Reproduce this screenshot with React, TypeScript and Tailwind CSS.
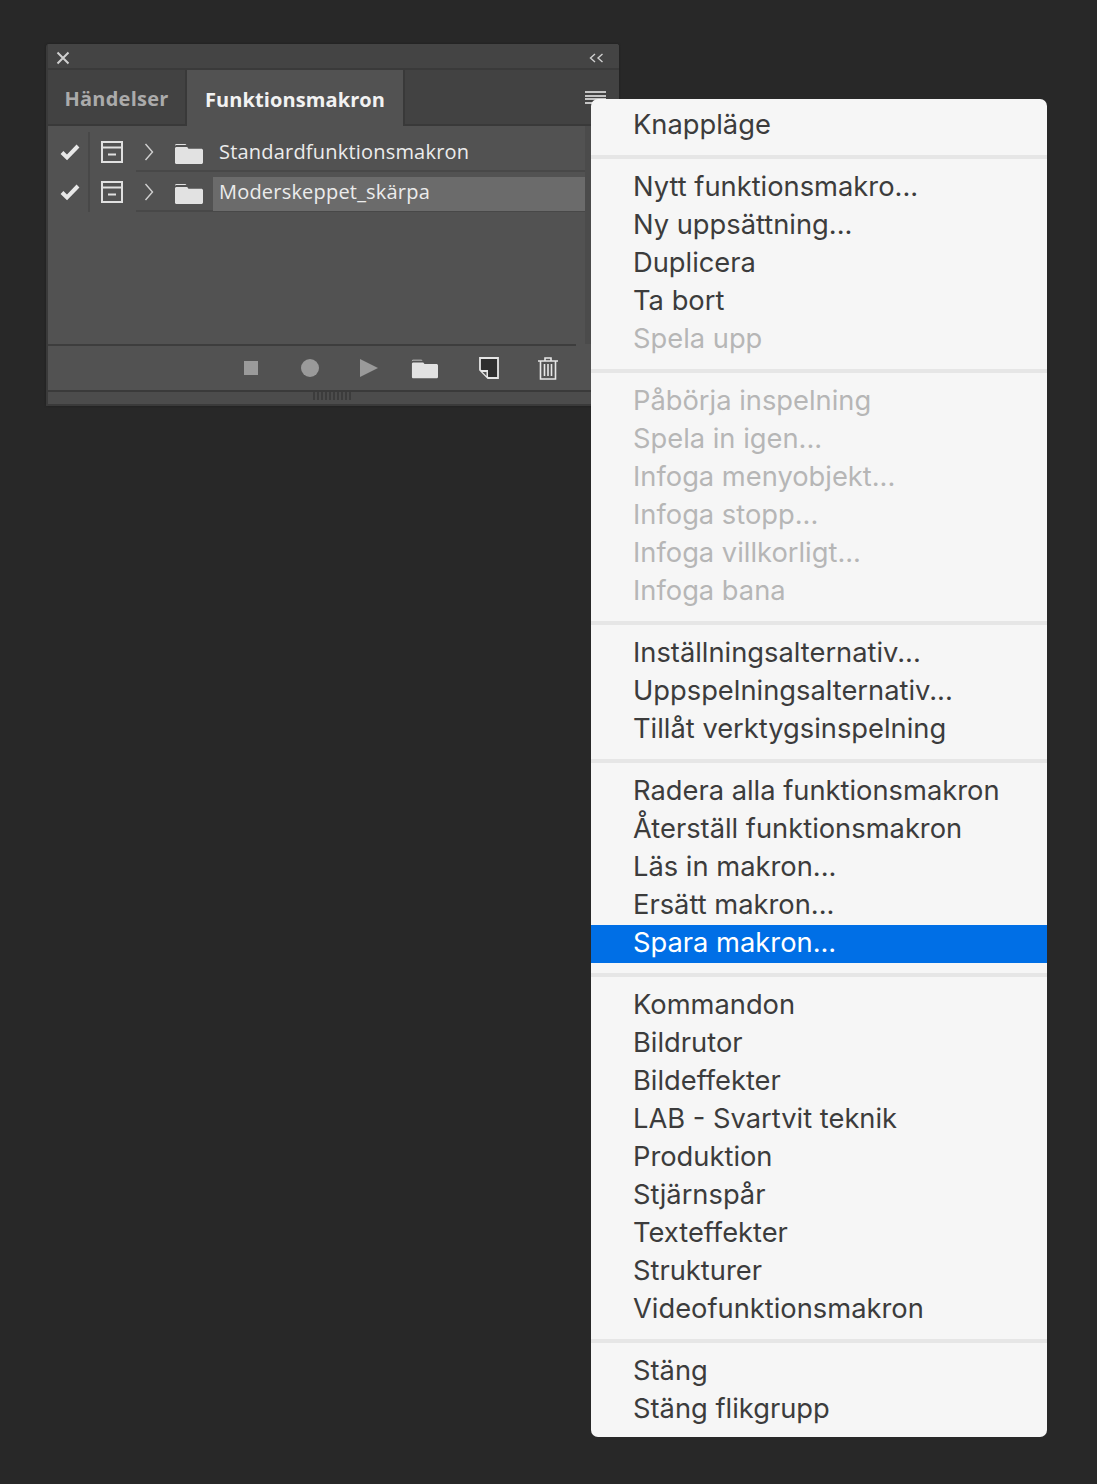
import React from 'react'

const groups = [
  [{ label: 'Knappläge' }],
  [
    { label: 'Nytt funktionsmakro...' },
    { label: 'Ny uppsättning...' },
    { label: 'Duplicera' },
    { label: 'Ta bort' },
    { label: 'Spela upp', disabled: true },
  ],
  [
    { label: 'Påbörja inspelning', disabled: true },
    { label: 'Spela in igen...', disabled: true },
    { label: 'Infoga menyobjekt...', disabled: true },
    { label: 'Infoga stopp...', disabled: true },
    { label: 'Infoga villkorligt...', disabled: true },
    { label: 'Infoga bana', disabled: true },
  ],
  [
    { label: 'Inställningsalternativ...' },
    { label: 'Uppspelningsalternativ...' },
    { label: 'Tillåt verktygsinspelning' },
  ],
  [
    { label: 'Radera alla funktionsmakron' },
    { label: 'Återställ funktionsmakron' },
    { label: 'Läs in makron...' },
    { label: 'Ersätt makron...' },
    { label: 'Spara makron...', active: true },
  ],
  [
    { label: 'Kommandon' },
    { label: 'Bildrutor' },
    { label: 'Bildeffekter' },
    { label: 'LAB - Svartvit teknik' },
    { label: 'Produktion' },
    { label: 'Stjärnspår' },
    { label: 'Texteffekter' },
    { label: 'Strukturer' },
    { label: 'Videofunktionsmakron' },
  ],
  [{ label: 'Stäng' }, { label: 'Stäng flikgrupp' }],
]

function Folder({ className }: { className: string }) {
  return (
    <svg className={className} viewBox="0 0 29 23" fill="#e2e2e2">
      <path d="M1 3.500C1 2.700 1.600 2 2.500 2H11c.6 0 1.200.4 1.400 1H2.600C1.800 3 1 3.400 1 4.200V3.500zM1 6.500C1 5.700 1.600 5 2.500 5h10.700l1.300 1.800h12.800c.9 0 1.700.7 1.700 1.600v12.100c0 .9-.8 1.500-1.700 1.500H2.500C1.600 22 1 21.400 1 20.500V6.500z" />
    </svg>
  )
}

function Row({ name, selected }: { name: string; selected?: boolean }) {
  return (
    <div className="flex h-10 items-center">
      <div className="flex h-full w-[42px] items-center justify-center border-r-2 border-[#484848] pl-[3px]">
        <svg className="h-[18px] w-[20px]" viewBox="0 0 20 18" fill="none" stroke="#e8e8e8" strokeWidth="4">
          <path d="M2 9.500l5 5L18 3" />
        </svg>
      </div>
      <div className="flex h-full w-[46px] items-center justify-center pr-[2px]">
        <svg className="h-[24px] w-[24px]" viewBox="0 0 24 24" fill="none" stroke="#e0e0e0" strokeWidth="2">
          <rect x="2" y="2" width="20" height="20" />
          <path d="M2 7.500h20M8 14.500h8" />
        </svg>
      </div>
      <div className="flex h-full flex-1 items-center shadow-[inset_0_-2px_0_#484848]">
        <div className="flex w-[26px] items-center justify-center">
          <svg className="h-[20px] w-[10px]" viewBox="0 0 10 20" fill="none" stroke="#d0d0d0" strokeWidth="1.400">
            <path d="M1.500 2l7 8-7 8" />
          </svg>
        </div>
        <div className="flex w-[51px] items-center justify-center pl-[2px] pt-0.5">
          <Folder className="h-[23px] w-[29px]" />
        </div>
        <div className="h-[34px] w-[372px] translate-y-[2px]">
          <div
            className={`flex h-full items-center pb-[4px] pl-[6px] text-[20px] tracking-[0.2px] text-[#ececec] ${
              selected ? 'bg-[#6b6b6b]' : ''
            }`}
          >
            {name}
          </div>
        </div>
      </div>
    </div>
  )
}

export default function App() {
  return (
    <div className="relative h-[1484px] w-[1097px] overflow-hidden bg-[#282828] pl-[46px] pt-[44px] font-['Open_Sans',sans-serif]">
      <div className="w-[573px] overflow-hidden rounded-t-[3px] border-b-2 border-l-2 border-[#3a3a3a] bg-[#525252] shadow-[0_0_2px_#1c1c1c]">
        <div className="flex h-[26px] items-center justify-between border-b-2 border-[#3a3a3a] bg-[#444444] pl-[8px] pr-[15px] pt-[4px]">
          <svg className="h-[14px] w-[14px]" viewBox="0 0 14 14" stroke="#cfcfcf" strokeWidth="2">
            <path d="M1.500 1.500l11 11M12.500 1.500l-11 11" />
          </svg>
          <svg className="h-[10px] w-[15px]" viewBox="0 0 15 10" fill="none" stroke="#cfcfcf" strokeWidth="1.400">
            <path d="M6 1L1.500 5 6 9M13.500 1L9 5l4.500 4" />
          </svg>
        </div>

        <div className="flex h-[56px] bg-[#424242]">
          <div className="flex w-[139px] items-center justify-center border-b-2 border-r-2 border-[#393939] pt-[4px] text-[20px] font-bold tracking-[0.25px] text-[#ababab]">
            Händelser
          </div>
          <div className="flex w-[216px] items-center justify-center bg-[#525252] pt-[3px] text-[20px] font-bold tracking-[0.1px] text-[#f2f2f2]">
            Funktionsmakron
          </div>
          <div className="flex flex-1 justify-end border-b-2 border-l-2 border-[#393939] pr-[13px] pt-[21px]">
            <div className="flex h-[13px] w-[21px] flex-col justify-between">
              <div className="h-[2px] bg-[#c4c4c4]" />
              <div className="h-[2px] bg-[#c4c4c4]" />
              <div className="h-[2px] bg-[#c4c4c4]" />
              <div className="h-[2px] bg-[#c4c4c4]" />
            </div>
          </div>
        </div>

        <div className="flex h-[218px]">
          <div className="w-[537px] pt-[6px]">
            <Row name="Standardfunktionsmakron" />
            <Row name="Moderskeppet_skärpa" selected />
          </div>
          <div className="flex-1 bg-[#4b4b4b]" />
        </div>

        <div className="h-[2px] w-[528px] bg-[#3d3d3d]" />
        <div className="flex h-[44px] items-center pl-[196px]">
          <div className="h-[14px] w-[14px] bg-[#9a9a9a]" />
          <div className="ml-[43px] h-[18px] w-[18px] rounded-full bg-[#9a9a9a]" />
          <svg className="ml-[41px] h-[18px] w-[18px]" viewBox="0 0 18 18" fill="#9a9a9a">
            <path d="M0 0l18 9-18 9z" />
          </svg>
          <Folder className="ml-[33px] h-[23px] w-[27px]" />
          <svg className="ml-[41px] h-[22px] w-[20px]" viewBox="0 0 20 22">
            <path d="M1 1h18v20H9l-8-8z" fill="#2f2f2f" stroke="#e6e6e6" strokeWidth="1.800" />
            <path d="M1 13h8v8z" fill="#e6e6e6" />
            <path d="M3.500 15h4v4z" fill="#525252" />
          </svg>
          <svg className="ml-[38px] h-[24px] w-[22px]" viewBox="0 0 22 24" fill="none" stroke="#e6e6e6" strokeWidth="1.600">
            <path d="M1 5h20M8 5V2h6v3M3.500 5v18h15V5M7.500 8v12M11 8v12M14.500 8v12" />
          </svg>
        </div>

        <div className="flex h-[14px] justify-center border-t-2 border-[#3a3a3a] bg-[#4c4c4c] pr-[4px]">
          <div className="h-[8px] w-[38px] bg-[repeating-linear-gradient(90deg,#3c3c3c_0,#3c3c3c_2px,transparent_2px,transparent_4px)]" />
        </div>
      </div>

      <div className="absolute left-[591px] top-[99px] w-[456px] rounded-[7px] bg-[#f6f6f6] pb-[8px] pt-[8px] font-['Inter',sans-serif] text-[27.300px] text-[#3c3c3c]">
        {groups.map((group, i) => (
          <div key={i}>
            {i > 0 && <div className="my-[10px] h-[4px] bg-[#e6e6e6]" />}
            {group.map((item: { label: string; disabled?: boolean; active?: boolean }) => (
              <div
                key={item.label}
                className={`flex h-[38px] items-center pb-[2px] pl-[42px] ${
                  item.active ? 'bg-[#006fe6] text-white' : item.disabled ? 'text-[#b6b6b6]' : ''
                }`}
              >
                {item.label}
              </div>
            ))}
          </div>
        ))}
      </div>
    </div>
  )
}
